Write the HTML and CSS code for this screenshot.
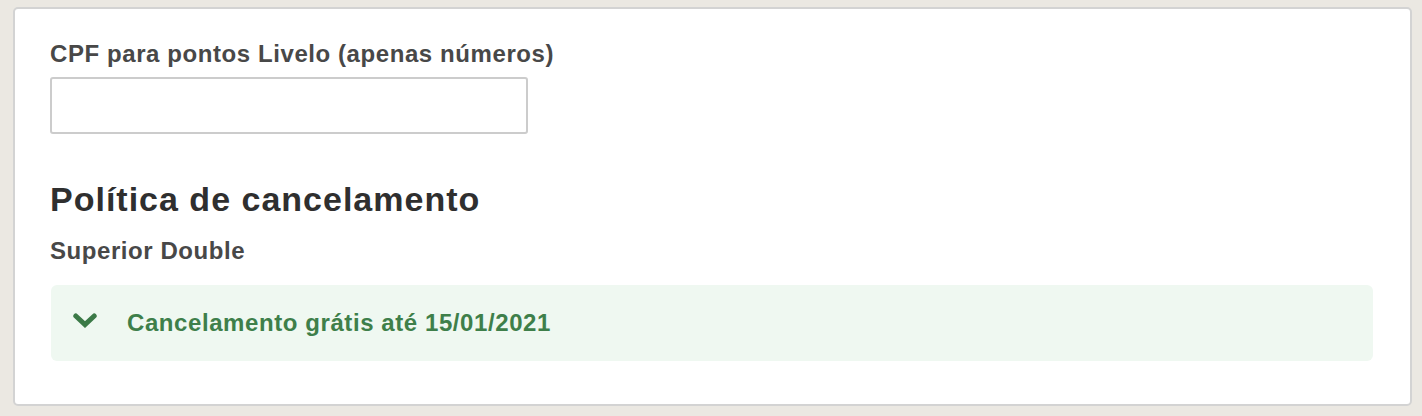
FILE: index.html
```html
<!DOCTYPE html>
<html lang="pt-BR">
<head>
<meta charset="utf-8">
<title>Política de cancelamento</title>
<link rel="stylesheet" href="styles.css">
</head>
<body>
<div class="page">
  <section class="card">
    <div class="field">
      <label class="field-label" for="cpf">CPF para pontos Livelo (apenas números)</label>
      <input class="field-input" id="cpf" type="text">
    </div>
    <h2 class="section-title">Política de cancelamento</h2>
    <div class="room-name">Superior Double</div>
    <div class="policy">
      <svg class="chevron" viewBox="0 0 24 15" width="24" height="15" aria-hidden="true">
        <path d="M2.8 3 L12 11.6 L21.2 3" fill="none" stroke="currentColor" stroke-width="5" stroke-linecap="round" stroke-linejoin="miter"/>
      </svg>
      <span class="policy-text">Cancelamento grátis até 15/01/2021</span>
    </div>
  </section>
</div>
</body>
</html>
```
FILE: styles.css
```css
* { box-sizing: border-box; }
html, body { margin: 0; padding: 0; }
body {
  background: #ebe8e2;
  font-family: "Liberation Sans", Arial, sans-serif;
  width: 1422px;
  height: 416px;
  overflow: hidden;
}
.page {
  padding: 7px 10px 0 13px;
}
.card {
  background: #fff;
  border: 2px solid #d3d3d3;
  border-radius: 5px;
  width: 1399px;
  height: 399px;
  padding: 30px 35px 0 35px;
  display: flex;
  flex-direction: column;
}
.field {
  display: flex;
  flex-direction: column;
}
.field-label {
  font-size: 24px;
  letter-spacing: 0.58px;
  font-weight: bold;
  color: #484848;
  line-height: 30px;
}
.field-input {
  margin-top: 8px;
  width: 478px;
  height: 57px;
  border: 2px solid #cccccc;
  border-radius: 3px;
  background: #fff;
}
.section-title {
  margin: 45px 0 0 0;
  font-size: 34px;
  letter-spacing: 1px;
  font-weight: bold;
  color: #2f2f2f;
  line-height: 40px;
}
.room-name {
  margin-top: 17px;
  font-size: 24px;
  letter-spacing: 0.56px;
  font-weight: bold;
  color: #484848;
  line-height: 30px;
}
.policy {
  margin: 19px 0 0 1px;
  width: 1322px;
  height: 76px;
  background: #eff8f1;
  border-radius: 6px;
  display: flex;
  align-items: center;
  padding-left: 22px;
}
.chevron {
  flex: none;
  margin-right: 30px;
  margin-bottom: 5px;
  color: #3b7a47;
}
.policy-text {
  font-size: 24px;
  letter-spacing: 0.58px;
  line-height: 30px;
  font-weight: bold;
  color: #3e7f4a;
}
```
